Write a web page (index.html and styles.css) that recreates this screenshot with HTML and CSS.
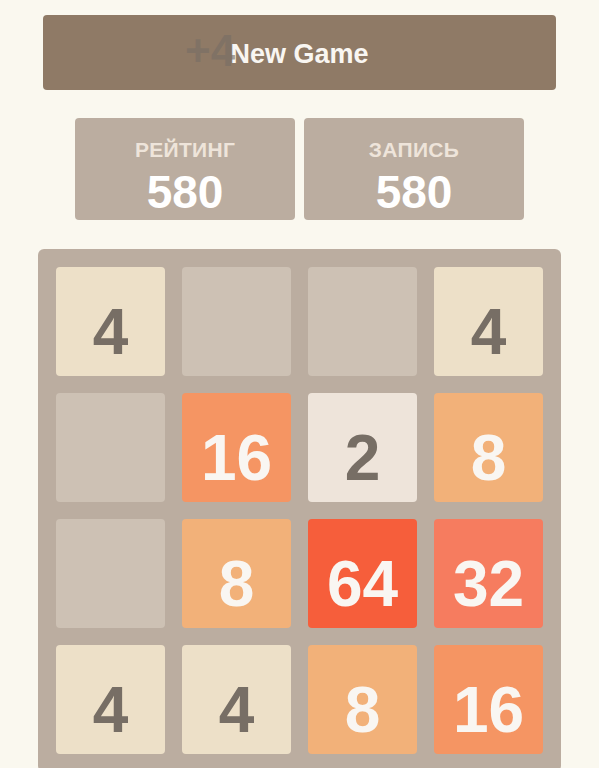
FILE: index.html
```html
<!DOCTYPE html>
<html lang="ru">
<head>
<meta charset="utf-8">
<title>2048</title>
<link rel="stylesheet" href="styles.css">
</head>
<body>
<div class="page">
  <button class="new-game">
    <span class="new-game-label">New Game</span>
    <span class="score-addition">+4</span>
  </button>
  <div class="scores">
    <div class="score-box">
      <div class="score-title">РЕЙТИНГ</div>
      <div class="score-value">580</div>
    </div>
    <div class="score-box">
      <div class="score-title">ЗАПИСЬ</div>
      <div class="score-value">580</div>
    </div>
  </div>
  <div class="board">
    <div class="cell t4">4</div>
    <div class="cell"></div>
    <div class="cell"></div>
    <div class="cell t4">4</div>

    <div class="cell"></div>
    <div class="cell t16">16</div>
    <div class="cell t2">2</div>
    <div class="cell t8">8</div>

    <div class="cell"></div>
    <div class="cell t8">8</div>
    <div class="cell t64">64</div>
    <div class="cell t32">32</div>

    <div class="cell t4">4</div>
    <div class="cell t4">4</div>
    <div class="cell t8">8</div>
    <div class="cell t16">16</div>
  </div>
</div>
</body>
</html>
```

FILE: styles.css
```css
html, body {
  margin: 0;
  padding: 0;
  background: #faf8ef;
  font-family: "Liberation Sans", Arial, sans-serif;
  overflow: hidden;
}

.page {
  display: flex;
  flex-direction: column;
  align-items: center;
  padding-top: 15px;
}

.new-game {
  position: relative;
  width: 513px;
  height: 75px;
  border: none;
  border-radius: 4px;
  background: #8f7a66;
  color: #f9f6f2;
  font-family: "Liberation Sans", Arial, sans-serif;
  font-weight: bold;
  font-size: 27px;
  display: flex;
  align-items: center;
  justify-content: center;
  padding: 4px 0 0 0;
  margin: 0 0 28px 0;
}

.new-game-label {
  line-height: 1;
}

.score-addition {
  position: absolute;
  left: 142px;
  top: 14px;
  font-size: 44px;
  line-height: 1;
  color: rgba(119, 110, 101, 0.65);
}

.scores {
  display: flex;
  gap: 9px;
  margin-bottom: 29px;
}

.score-box {
  width: 220px;
  height: 102px;
  box-sizing: border-box;
  background: #bbada0;
  border-radius: 4px;
  display: flex;
  flex-direction: column;
  align-items: center;
  padding-top: 22px;
  font-weight: bold;
}

.score-title {
  font-size: 21px;
  line-height: 20px;
  letter-spacing: 0.3px;
  color: #eee4da;
}

.score-value {
  margin-top: 11px;
  font-size: 46px;
  line-height: 42px;
  color: #ffffff;
}

.board {
  width: 523px;
  box-sizing: border-box;
  background: #bbada0;
  border-radius: 6px;
  padding: 18px;
  display: grid;
  grid-template-columns: repeat(4, 109px);
  grid-auto-rows: 109px;
  gap: 17px;
}

.cell {
  background: #cdc1b4;
  border-radius: 4px;
  display: flex;
  align-items: center;
  justify-content: center;
  box-sizing: border-box;
  padding-top: 20px;
  font-weight: bold;
  font-size: 64px;
  line-height: 1;
  color: #f9f6f2;
}

.t2 { background: #eee4da; color: #776e65; }
.t4 { background: #ede0c8; color: #776e65; }
.t8 { background: #f2b179; }
.t16 { background: #f59563; }
.t32 { background: #f67c5f; }
.t64 { background: #f65e3b; }
```
